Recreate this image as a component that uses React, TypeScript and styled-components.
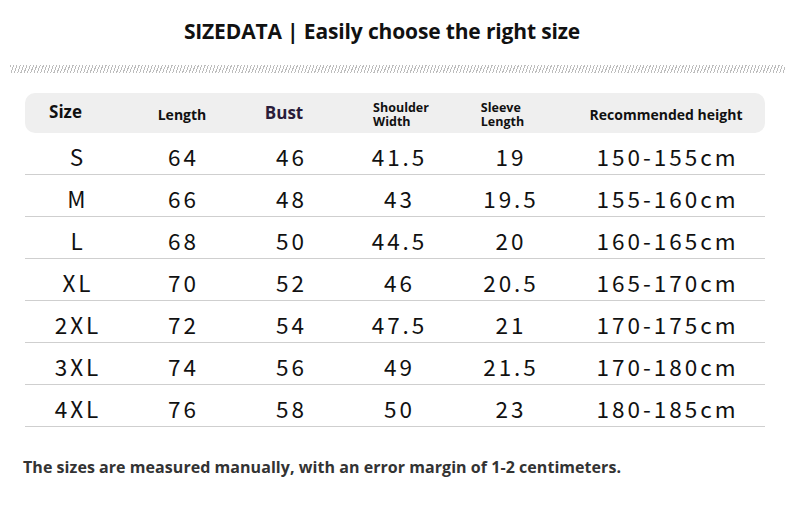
import React from 'react';
import styled, { createGlobalStyle } from 'styled-components';

type Row = [string, string, string, string, string, string];

const rows: Row[] = [
  ['S', '64', '46', '41.5', '19', '150-155cm'],
  ['M', '66', '48', '43', '19.5', '155-160cm'],
  ['L', '68', '50', '44.5', '20', '160-165cm'],
  ['XL', '70', '52', '46', '20.5', '165-170cm'],
  ['2XL', '72', '54', '47.5', '21', '170-175cm'],
  ['3XL', '74', '56', '49', '21.5', '170-180cm'],
  ['4XL', '76', '58', '50', '23', '180-185cm'],
];

const GlobalStyle = createGlobalStyle`
  html, body {
    margin: 0;
    padding: 0;
    background: #ffffff;
  }
  body {
    width: 790px;
    height: 511px;
    overflow: hidden;
    font-family: "Open Sans", "Noto Sans", sans-serif;
    color: #111;
  }
`;

const Page = styled.div`
  display: flex;
  flex-direction: column;
  padding-top: 16px;
`;

const Title = styled.h1`
  margin: 0;
  height: 30px;
  padding-right: 26px;
  text-align: center;
  font-size: 21px;
  font-weight: 700;
  line-height: 30px;
  letter-spacing: -0.15px;
  color: #111;
`;

const Hatch = styled.div`
  margin: 19px 5px 0 10px;
  height: 8px;
  background: repeating-linear-gradient(110deg, #bdbdbd 0 1px, transparent 1px 3.1px);
`;

const Table = styled.div`
  margin: 20px 25px 0 25px;
  display: flex;
  flex-direction: column;
`;

const columns = '103px 108px 108px 108px 115px 198px';

const HeaderBar = styled.div`
  display: grid;
  grid-template-columns: ${columns};
  height: 40px;
  align-items: center;
  background: #efefef;
  border-radius: 10px;
`;

const HeadCell = styled.div<{ $size: number; $dx?: number; $dy?: number; $color?: string }>`
  justify-self: center;
  font-family: "Open Sans", "Noto Sans", sans-serif;
  font-weight: 700;
  font-size: ${(p) => p.$size}px;
  line-height: 1.2;
  color: ${(p) => p.$color || '#111'};
  text-align: left;
  transform: translate(${(p) => p.$dx || 0}px, ${(p) => p.$dy || 0}px);
`;

const HeadLine = styled.span`
  display: block;
  line-height: 14px;
  height: 14px;
  overflow: visible;
`;

const DataRow = styled.div`
  display: grid;
  grid-template-columns: ${columns};
  height: 42px;
  align-items: center;
  border-bottom: 1px solid #cfcfcf;
  box-sizing: border-box;
  padding-top: 5px;
`;

const DataCell = styled.div`
  justify-self: center;
  font-family: "Noto Sans CJK SC", "Noto Sans", sans-serif;
  font-size: 22.5px;
  letter-spacing: 3px;
  line-height: 1;
  color: #111;
  padding-left: 3px;
`;

const Note = styled.p`
  margin: 30px 0 0 23px;
  font-family: "Open Sans", "Noto Sans", sans-serif;
  font-weight: 700;
  font-size: 16px;
  line-height: 20px;
  letter-spacing: 0.05px;
  color: #333;
`;

export default function App() {
  return (
    <Page>
      <GlobalStyle />
      <Title>SIZEDATA | Easily choose the right size</Title>
      <Hatch />
      <Table>
        <HeaderBar>
          <HeadCell $size={17} $dx={-11} $dy={-1}>Size</HeadCell>
          <HeadCell $size={14} $dy={2}>Length</HeadCell>
          <HeadCell $size={17} $dx={-6} $color="#2a1c3a">Bust</HeadCell>
          <HeadCell $size={12.5} $dx={3} $dy={2}>
            <HeadLine>Shoulder</HeadLine>
            <HeadLine>Width</HeadLine>
          </HeadCell>
          <HeadCell $size={12.5} $dx={-7} $dy={2}>
            <HeadLine>Sleeve</HeadLine>
            <HeadLine>Length</HeadLine>
          </HeadCell>
          <HeadCell $size={14} $dy={2}>Recommended height</HeadCell>
        </HeaderBar>
        {rows.map((r) => (
          <DataRow key={r[0]}>
            {r.map((v, i) => (
              <DataCell key={i}>{v}</DataCell>
            ))}
          </DataRow>
        ))}
      </Table>
      <Note>The sizes are measured manually, with an error margin of 1-2 centimeters.</Note>
    </Page>
  );
}
